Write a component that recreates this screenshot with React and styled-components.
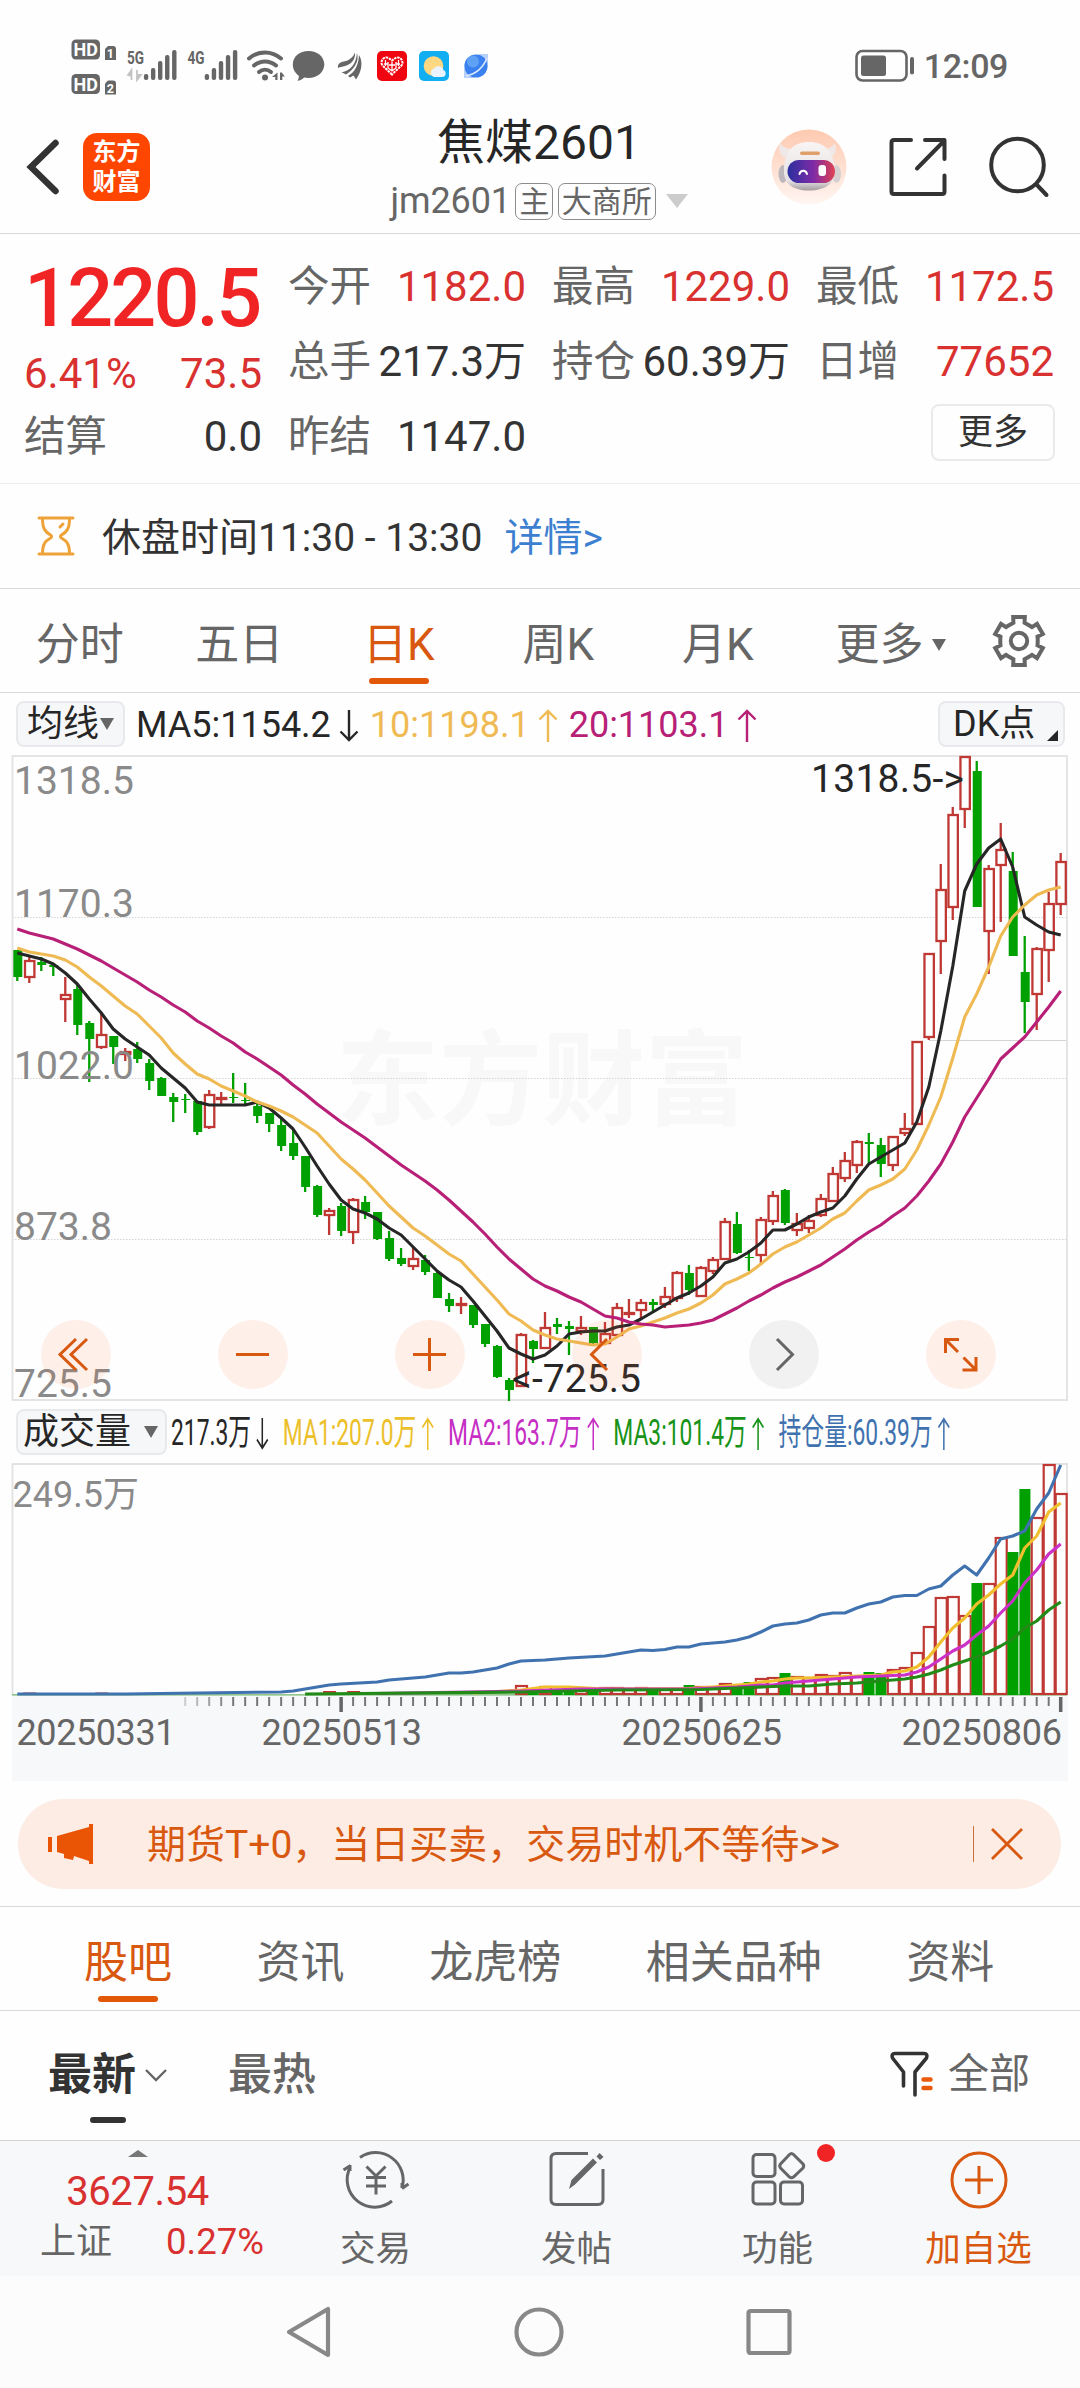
import React from "react";
import styled, { createGlobalStyle, css } from "styled-components";

const GlobalStyle = createGlobalStyle`
  body {
    margin: 0;
    background: #fefefe;
    color: #333;
    font-family: Roboto, "Noto Sans CJK SC", sans-serif;
  }
  svg {
    display: block;
    flex: none;
    overflow: visible;
  }
`;

const Page = styled.div`
  width: 1080px;
  height: 2388px;
  overflow: hidden;
  display: flex;
  flex-direction: column;
`;

/* status bar */
const StatusBar = styled.div`
  box-sizing: border-box;
  height: 100px;
  padding: 32px 72px 0 71px;
  display: flex;
  align-items: center;
  justify-content: space-between;
  color: #666;
`;
const StatusRight = styled.div`
  display: flex;
  align-items: center;
  gap: 9px;
`;
const Clock = styled.span`
  font-size: 34px;
  font-weight: 500;
  line-height: 40px;
  letter-spacing: -0.4px;
`;

/* header */
const Header = styled.header`
  height: 133px;
  padding: 0 31px 0 27px;
  border-bottom: 1px solid #d8d8d8;
  display: grid;
  grid-template-columns: 1fr auto 1fr;
  align-items: center;
`;
const HeaderSide = styled.div`
  display: flex;
  align-items: center;
  gap: ${({ $gap }) => $gap}px;
  justify-content: ${({ $end }) => ($end ? "flex-end" : "flex-start")};
`;
const Logo = styled.div`
  width: 67px;
  height: 68px;
  border-radius: 14px;
  background: #ff4600;
  color: #fff;
  font-size: 24px;
  font-weight: 700;
  line-height: 30px;
  display: flex;
  flex-direction: column;
  align-items: center;
  justify-content: center;
`;
const TitleBlock = styled.div`
  padding-left: 2px;
  display: flex;
  flex-direction: column;
  align-items: center;
  gap: 11px;
`;
const Title = styled.h1`
  margin: 0;
  font-size: 48px;
  font-weight: 400;
  line-height: 58px;
  color: #262626;
`;
const SubTitle = styled.div`
  display: flex;
  align-items: center;
  font-size: 36px;
  line-height: 37px;
  letter-spacing: -0.1px;
  color: #666;
`;
const Tag = styled.span`
  box-sizing: border-box;
  height: 37px;
  margin-left: 4.5px;
  padding: 0 3px;
  border: 1px solid #8c8c8c;
  border-radius: 7px;
  font-size: 30px;
  line-height: 35px;
`;
const Caret = styled.i`
  width: 0;
  height: 0;
  margin-left: ${({ $left }) => $left || 0}px;
  border-left: ${({ $w }) => $w / 2}px solid transparent;
  border-right: ${({ $w }) => $w / 2}px solid transparent;
  border-top: ${({ $h }) => $h}px solid ${({ $color }) => $color || "#666"};
`;

/* quote */
const Quote = styled.section`
  box-sizing: border-box;
  height: 250px;
  padding: 15px 25px 0 24px;
  border-bottom: 1px solid #ececec;
  display: flex;
  gap: 26px;
`;
const Summary = styled.div`
  width: 238px;
  display: flex;
  flex-direction: column;
`;
const Price = styled.div`
  font-size: 81px;
  font-weight: 500;
  line-height: 100px;
  letter-spacing: -2.9px;
  color: #f02424;
`;
const Pair = styled.div`
  height: ${({ $h }) => $h || 75}px;
  margin-top: ${({ $top }) => $top || 0}px;
  display: flex;
  align-items: center;
  justify-content: space-between;
  white-space: nowrap;
  font-size: 42px;
  line-height: 50px;
`;
const Stats = styled.div`
  flex: 1;
  display: grid;
  grid-template-columns: repeat(3, 238px);
  grid-auto-rows: 75px;
  column-gap: 26px;
`;
const Label = styled.span`
  font-size: 41.5px;
  color: #666;
`;
const Value = styled.span`
  color: ${({ $up }) => ($up ? "#d93030" : "#333")};
`;
const MoreButton = styled.button`
  grid-column: 3;
  justify-self: end;
  align-self: center;
  box-sizing: border-box;
  width: 124px;
  height: 57px;
  margin: 0 -1px 8px 0;
  padding: 0;
  border: 2px solid #eaeaea;
  border-radius: 8px;
  background: #fefefe;
  color: #333;
  font: inherit;
  font-size: 35px;
  line-height: 52px;
`;

const Notice = styled.div`
  height: 104px;
  padding: 0 37px;
  border-bottom: 1px solid #d8d8d8;
  display: flex;
  align-items: center;
  font-size: 39px;
  line-height: 50px;
`;
const NoticeText = styled.span`
  margin: 3px 0 0 27px;
`;
const NoticeLink = styled.a`
  margin: 3px 0 0 22px;
  color: #3d7fd0;
`;

/* tabs */
const PeriodTabs = styled.nav`
  height: 103px;
  border-bottom: 1px solid #d8d8d8;
  display: flex;
`;
const Tab = styled.div`
  box-sizing: border-box;
  height: 103px;
  padding-top: 29.5px;
  display: flex;
  flex-direction: column;
  align-items: center;
  gap: 7.5px;
  font-size: 44px;
  line-height: 52px;
  color: ${({ $active }) => ($active ? "#d9580f" : "#666")};
  ${({ $width }) =>
    $width &&
    css`
      width: ${$width}px;
    `}
`;
const TabRow = styled.div`
  display: flex;
  align-items: center;
`;
const TabBar = styled.i`
  width: 60px;
  height: 6px;
  border-radius: 3px;
  background: #e35709;
`;
const GearBox = styled.div`
  margin: 26px 0 0 9px;
`;

/* chart */
const Legend = styled.div`
  height: 62px;
  padding: 0 15px 0 16px;
  display: flex;
  align-items: center;
  font-size: 36px;
  line-height: 42px;
  white-space: nowrap;
`;
const Pill = styled.div`
  box-sizing: border-box;
  flex: none;
  width: ${({ $width }) => $width}px;
  height: 46px;
  padding: ${({ $pad }) => $pad || "0 9px"};
  border: 2px solid #e7e9ed;
  border-radius: 8px;
  background: #f6f7f9;
  color: #262626;
  display: flex;
  align-items: center;
  justify-content: space-between;
`;
const LegendItem = styled.span`
  display: flex;
  align-items: center;
  color: ${({ $color }) => $color};
`;
const MaLegend = styled.div`
  flex: 1;
  margin: 2px 0 0 11px;
  display: flex;
  gap: 3px;
`;
const VolLegend = styled.div`
  margin: 1px 0 0 4px;
  display: flex;
  gap: 14px;
  transform: scaleX(0.634);
  transform-origin: 0 50%;
`;
const Corner = styled.i`
  align-self: flex-end;
  margin-bottom: 4px;
  border-bottom: 11px solid #262626;
  border-left: 11px solid transparent;
`;
const ChartArea = styled.div`
  position: relative;
  margin-left: 12px;
  width: 1056px;
`;
const Controls = styled.div`
  position: absolute;
  left: 29px;
  bottom: 12px;
  display: flex;
  gap: 107.5px;
`;
const RoundButton = styled.div`
  width: 69.5px;
  height: 69.5px;
  border-radius: 50%;
  background: ${({ $muted }) =>
    $muted ? "rgba(0, 0, 0, 0.05)" : "rgba(255, 110, 50, 0.1)"};
  color: ${({ $muted }) => ($muted ? "#666" : "#d9580f")};
  display: flex;
  align-items: center;
  justify-content: center;
`;

/* banner */
const Banner = styled.div`
  box-sizing: border-box;
  height: 90px;
  margin: 18px 19px 17px 18px;
  padding: 0 38px 0 30px;
  border-radius: 45px;
  background: #fcece4;
  color: #d9580f;
  display: flex;
  align-items: center;
  font-size: 39px;
  line-height: 50px;
`;
const BannerText = styled.span`
  flex: 1;
  margin: 1px 0 0 53px;
`;
const BannerLine = styled.i`
  width: 1.5px;
  height: 36px;
  margin-right: 17px;
  background: #d0703c;
`;

const SectionTabs = styled.nav`
  height: 103px;
  padding-left: 84px;
  border-top: 1px solid #d8d8d8;
  border-bottom: 1px solid #d8d8d8;
  display: flex;
  gap: 84.6px;
`;
const FeedBar = styled.div`
  height: 129px;
  padding: 0 50px 0 48px;
  display: flex;
  justify-content: space-between;
`;
const SortGroup = styled.div`
  display: flex;
  gap: 60px;
`;
const Sort = styled.div`
  padding-top: 38px;
  display: flex;
  flex-direction: column;
  align-items: center;
  gap: 16px;
  font-size: 44px;
  font-weight: ${({ $active }) => ($active ? 700 : 500)};
  line-height: 52px;
  color: ${({ $active }) => ($active ? "#333" : "#666")};
`;
const SortRow = styled.div`
  display: flex;
  align-items: center;
  gap: 8px;
`;
const SortBar = styled.i`
  width: 36px;
  height: 6px;
  border-radius: 3px;
  background: #333;
`;
const Filter = styled.div`
  height: 126px;
  display: flex;
  align-items: center;
  gap: 14px;
  font-size: 41px;
  line-height: 50px;
  color: #666;
`;

/* bottom bar */
const BottomBar = styled.footer`
  box-sizing: border-box;
  height: 136px;
  border-top: 1px solid #d4d4d4;
  background: #f7f8fa;
  display: flex;
`;
const IndexBox = styled.div`
  width: 275px;
  padding-top: 9px;
  display: flex;
  flex-direction: column;
  align-items: center;
  color: #d93030;
`;
const UpCaret = styled.i`
  border-left: 10.5px solid transparent;
  border-right: 10.5px solid transparent;
  border-bottom: 7px solid #777;
`;
const IndexValue = styled.div`
  margin-top: 11px;
  font-size: 40px;
  line-height: 48px;
  letter-spacing: -0.4px;
`;
const IndexRow = styled.div`
  box-sizing: border-box;
  width: 100%;
  margin-top: 4px;
  padding: 0 11px 0 40px;
  display: flex;
  justify-content: space-between;
  font-size: 36.5px;
  line-height: 44px;
`;
const IndexName = styled.span`
  font-size: 36px;
  color: #666;
`;
const Action = styled.div`
  position: relative;
  width: 201px;
  padding-top: 8px;
  display: flex;
  flex-direction: column;
  align-items: center;
  gap: 18px;
  font-size: 35.5px;
  line-height: 44px;
  color: ${({ $accent }) => ($accent ? "#d9580f" : "#666")};
`;
const Dot = styled.i`
  position: absolute;
  left: 140px;
  top: 3px;
  width: 18px;
  height: 18px;
  border-radius: 50%;
  background: #f02424;
`;
const NavBar = styled.div`
  height: 112px;
  padding-right: 2px;
  background: #fcfcfc;
  display: flex;
  align-items: center;
  justify-content: center;
  gap: 182.5px;
`;

const RED = "#bf3833";
const GREEN = "#00a000";

// [up, high, body top, body bottom, low] in chart pixels
const candles = [
  [0, 950, 950, 977, 981], [1, 957, 961, 977, 983], [0, 957, 962, 965, 971], [0, 963, 965, 967, 976],
  [1, 977, 995, 999, 1022], [0, 985, 989, 1025, 1035], [0, 1021, 1023, 1039, 1082], [1, 1012, 1035, 1047, 1049],
  [0, 1036, 1036, 1047, 1064], [1, 1048, 1052, 1054, 1061], [0, 1042, 1049, 1059, 1063], [0, 1059, 1063, 1081, 1090],
  [0, 1077, 1078, 1096, 1096], [0, 1093, 1097, 1102, 1122], [0, 1094, 1099, 1100, 1113], [0, 1101, 1101, 1132, 1135],
  [1, 1090, 1095, 1127, 1129], [1, 1092, 1098, 1099, 1104], [0, 1073, 1097, 1098, 1103], [0, 1083, 1100, 1101, 1104],
  [0, 1103, 1106, 1116, 1123], [0, 1113, 1113, 1124, 1132], [0, 1118, 1125, 1146, 1151], [0, 1130, 1143, 1156, 1160],
  [0, 1156, 1156, 1187, 1192], [0, 1185, 1186, 1215, 1217], [1, 1208, 1211, 1215, 1235], [0, 1203, 1206, 1231, 1236],
  [1, 1198, 1200, 1232, 1244], [0, 1196, 1202, 1212, 1219], [0, 1212, 1212, 1239, 1240], [0, 1231, 1238, 1259, 1261],
  [0, 1248, 1258, 1264, 1266], [1, 1247, 1259, 1266, 1270], [0, 1255, 1260, 1272, 1275], [0, 1271, 1273, 1298, 1298],
  [0, 1293, 1299, 1306, 1312], [1, 1297, 1304, 1305, 1314], [0, 1305, 1305, 1325, 1328], [0, 1324, 1324, 1344, 1347],
  [0, 1345, 1346, 1377, 1378], [0, 1378, 1380, 1390, 1401], [1, 1333, 1335, 1386, 1387], [0, 1340, 1341, 1349, 1363],
  [1, 1312, 1328, 1348, 1348], [0, 1318, 1324, 1327, 1334], [0, 1321, 1326, 1329, 1355], [1, 1316, 1328, 1331, 1335],
  [0, 1327, 1327, 1343, 1344], [1, 1322, 1334, 1343, 1345], [1, 1303, 1308, 1335, 1338], [1, 1299, 1313, 1314, 1318],
  [1, 1299, 1303, 1310, 1319], [0, 1299, 1302, 1305, 1312], [1, 1287, 1297, 1304, 1308], [1, 1271, 1273, 1298, 1302],
  [0, 1265, 1273, 1290, 1295], [1, 1266, 1268, 1296, 1297], [1, 1257, 1260, 1271, 1274], [1, 1218, 1222, 1259, 1259],
  [0, 1212, 1224, 1253, 1254], [0, 1250, 1257, 1258, 1271], [1, 1217, 1220, 1255, 1263], [1, 1191, 1196, 1221, 1225],
  [0, 1189, 1190, 1223, 1225], [1, 1213, 1224, 1230, 1236], [1, 1215, 1221, 1228, 1233], [1, 1194, 1199, 1215, 1217],
  [1, 1167, 1174, 1201, 1202], [1, 1152, 1161, 1178, 1182], [1, 1140, 1142, 1165, 1173], [0, 1133, 1142, 1144, 1163],
  [0, 1138, 1145, 1164, 1177], [1, 1136, 1137, 1165, 1171], [1, 1113, 1129, 1133, 1136], [1, 1041, 1042, 1124, 1125],
  [1, 953, 954, 1037, 1040], [1, 864, 890, 941, 974], [1, 807, 815, 907, 920], [1, 757, 757, 809, 828],
  [0, 761, 771, 907, 907], [1, 865, 869, 931, 974], [1, 823, 850, 865, 922], [0, 852, 871, 956, 956],
  [0, 936, 972, 1002, 1033], [1, 947, 949, 994, 1030], [1, 892, 904, 950, 982], [1, 853, 862, 904, 915],
];

const ma5 = [
  953, 956, 959, 964, 973, 984, 999, 1013, 1029, 1039, 1047, 1055, 1068, 1078, 1088, 1102, 1105, 1105, 1105, 1105, 1102,
  1108, 1118, 1129, 1147, 1166, 1184, 1200, 1209, 1213, 1219, 1228, 1235, 1247, 1259, 1271, 1280, 1287, 1301, 1316,
  1331, 1348, 1354, 1359, 1355, 1346, 1334, 1332, 1331, 1331, 1327, 1325, 1319, 1312, 1305, 1298, 1293, 1286, 1277,
  1263, 1259, 1252, 1243, 1230, 1230, 1224, 1217, 1212, 1208, 1196, 1179, 1164, 1157, 1150, 1143, 1122, 1087, 1031,
  966, 891, 864, 848, 839, 867, 917, 925, 932, 935,
];
const ma10 = [
  948, 952, 954, 956, 960, 967, 977, 986, 996, 1006, 1014, 1026, 1038, 1053, 1064, 1074, 1079, 1086, 1091, 1096, 1102,
  1106, 1111, 1117, 1125, 1133, 1146, 1159, 1169, 1180, 1193, 1206, 1217, 1228, 1236, 1245, 1254, 1261, 1274, 1287,
  1300, 1314, 1321, 1330, 1335, 1339, 1341, 1343, 1345, 1344, 1337, 1329, 1326, 1322, 1318, 1313, 1309, 1303, 1295,
  1284, 1279, 1273, 1264, 1254, 1247, 1242, 1235, 1228, 1219, 1213, 1201, 1190, 1185, 1179, 1169, 1150, 1125, 1097,
  1058, 1017, 994, 967, 936, 917, 905, 895, 890, 887,
];
const ma20 = [
  929, 933, 936, 939, 944, 949, 955, 961, 968, 975, 982, 990, 997, 1005, 1012, 1021, 1028, 1036, 1043, 1052, 1059, 1067,
  1075, 1085, 1094, 1104, 1113, 1122, 1130, 1138, 1147, 1156, 1165, 1173, 1181, 1190, 1200, 1211, 1222, 1234, 1247,
  1259, 1269, 1279, 1286, 1291, 1297, 1302, 1309, 1316, 1318, 1322, 1324, 1325, 1327, 1326, 1325, 1323, 1320, 1314,
  1308, 1301, 1295, 1288, 1282, 1277, 1271, 1265, 1257, 1249, 1240, 1232, 1225, 1216, 1208, 1196, 1181, 1164, 1142,
  1117, 1098, 1079, 1059, 1048, 1037, 1022, 1007, 991,
];

// volume bar tops from candle 42 on, the ones before it are next to zero
const volumeTops = [
  1686, 1688, 1687, 1689, 1688, 1689, 1689, 1688, 1688, 1689, 1688, 1689, 1689, 1689, 1685, 1687, 1688, 1684, 1684,
  1682, 1679, 1678, 1673, 1677, 1678, 1675, 1676, 1673, 1677, 1672, 1673, 1670, 1668, 1653, 1627, 1598, 1597, 1616,
  1583, 1584, 1538, 1552, 1489, 1518, 1465, 1494,
];

const openInterest = [
  [0, 1694], [9, 1694], [15, 1693], [22, 1692], [23, 1691], [24, 1689], [25, 1687], [26, 1685], [27, 1684], [30, 1682],
  [31, 1680], [33, 1678], [34, 1677], [36, 1673], [37, 1673], [38, 1672], [40, 1668], [41, 1664], [42, 1661], [44, 1660],
  [46, 1658], [49, 1656], [52, 1650], [53, 1650.5], [54, 1649.5], [55, 1647], [56, 1647], [57, 1644], [59, 1642],
  [60, 1640], [61, 1637], [62, 1632], [63, 1626], [64, 1624], [65, 1623], [66, 1620], [67, 1615], [68, 1613], [69, 1613],
  [70, 1608], [71, 1604], [72, 1602], [73, 1597], [74, 1595.5], [75, 1595.5], [76, 1589], [77, 1586], [78, 1575],
  [79, 1566], [80, 1575], [81, 1558], [82, 1539], [83, 1536], [84, 1531], [85, 1509], [86, 1493], [87, 1465],
];
const volMa1 = [
  [38, 1693], [42, 1690], [44, 1687], [46, 1687], [49, 1689], [56, 1688.5], [58, 1687], [60, 1685], [61, 1684],
  [62, 1682], [63, 1681], [64, 1679], [65, 1678], [66, 1678], [68, 1677], [70, 1676], [72, 1675], [73, 1672],
  [74, 1671], [75, 1667], [76, 1657], [77, 1642], [78, 1628], [79, 1618], [80, 1604], [81, 1595], [82, 1584],
  [83, 1575], [84, 1548], [85, 1536], [86, 1512], [87, 1503],
];
const volMa2 = [
  [30, 1693.5], [42, 1691], [47, 1689], [56, 1689], [60, 1687], [62, 1685], [63, 1685], [64, 1683], [66, 1681],
  [68, 1679], [70, 1677], [74, 1675], [75, 1672], [76, 1667], [77, 1659], [78, 1651], [79, 1645], [80, 1635],
  [81, 1626], [82, 1613], [83, 1601], [84, 1583], [85, 1570], [86, 1554], [87, 1544],
];
const volMa3 = [
  [24, 1694], [42, 1692], [50, 1690], [57, 1689.5], [60, 1688], [64, 1686], [66, 1686], [68, 1684], [70, 1683],
  [72, 1681], [74, 1679], [75, 1677], [76, 1674], [77, 1670], [78, 1665], [79, 1661], [80, 1657], [81, 1652],
  [82, 1646], [83, 1639], [84, 1628], [85, 1621], [86, 1610], [87, 1602],
];

const xAt = (i) => 17.3 + i * 11.993;
const series = (ys) => ys.map((y, i) => `${xAt(i).toFixed(1)},${y}`).join(" ");
const sparse = (pts) => pts.map(([i, y]) => `${xAt(i).toFixed(1)},${y}`).join(" ");

function Line({ points, color }) {
  return (
    <polyline points={points} fill="none" stroke={color} strokeWidth="3.1" strokeLinejoin="round" />
  );
}

function KChart() {
  return (
    <svg width="1056" height="646" viewBox="12 755 1056 646">
      <text x="336" y="1117" fontSize="103" fontWeight="700" fill="#f8f8f8">东方财富</text>
      {[917.5, 1078.5, 1239.5].map((y) => (
        <line key={y} x1="12" x2="1067" y1={y} y2={y} stroke="#d4d4d4" strokeWidth="1" strokeDasharray="1.5 1.5" />
      ))}
      <line x1="929" x2="1067" y1="1040.5" y2="1040.5" stroke="#d4d4d4" />
      <rect x="12.5" y="756" width="1054.5" height="644" fill="none" stroke="#e2e2e2" strokeWidth="1.8" />
      {candles.map(([up, high, top, bottom, low], i) => {
        const x = xAt(i);
        const color = up ? RED : GREEN;
        return (
          <g key={i} stroke={color} strokeWidth="2.3">
            <line x1={x} x2={x} y1={high} y2={top} />
            <line x1={x} x2={x} y1={bottom} y2={low} />
            {up ? (
              <rect x={x - 4.3} y={top} width="9.4" height={bottom - top} fill="#fefefe" />
            ) : (
              <rect x={x - 4} y={top} width="9" height={Math.max(bottom - top, 1)} fill={color} stroke="none" />
            )}
          </g>
        );
      })}
      <Line points={series(ma5)} color="#262626" />
      <Line points={series(ma10)} color="#efba53" />
      <Line points={series(ma20)} color="#b81f77" />
      <g fontSize="39" fill="#8a8a8a">
        <text x="14" y="794">1318.5</text>
        <text x="14" y="917">1170.3</text>
        <text x="14" y="1079">1022.0</text>
        <text x="14" y="1240">873.8</text>
        <text x="14" y="1397">725.5</text>
      </g>
      <g fontSize="39" fill="#262626">
        <text x="811" y="792" textLength="153">1318.5-&gt;</text>
        <text x="512" y="1392" textLength="129">&lt;-725.5</text>
      </g>
    </svg>
  );
}

function VolumeChart() {
  const ticks = Array.from({ length: 74 }, (_, k) => k + 14);
  return (
    <svg width="1056" height="318" viewBox="12 1463 1056 318">
      <rect x="12" y="1695" width="1056" height="86" fill="#f7f8fa" />
      <path d="M12.5 1695V1464H1067V1695" fill="none" stroke="#e2e2e2" strokeWidth="1.8" />
      <line x1="12" x2="1067" y1="1694.8" y2="1694.8" stroke="#6fb568" strokeWidth="1.2" />
      {[1, 7].map((i) => (
        <rect key={i} x={xAt(i) - 6} y="1692.5" width="13" height="1.5" fill={RED} />
      ))}
      {[26, 28].map((i) => (
        <rect key={i} x={xAt(i) - 6} y="1691" width="13" height="3" fill={RED} />
      ))}
      {volumeTops.map((top, k) => {
        const i = k + 42;
        const x = xAt(i);
        return candles[i][0] ? (
          <rect key={i} x={x - 5} y={top} width="11" height={1694 - top} fill="#fefefe" stroke={RED} strokeWidth="2.2" />
        ) : (
          <rect key={i} x={x - 5.3} y={top} width="11" height={1695 - top} fill={GREEN} />
        );
      })}
      <Line points={sparse(openInterest)} color="#4072af" />
      <Line points={sparse(volMa1)} color="#f1bf2d" />
      <Line points={sparse(volMa2)} color="#cb31c6" />
      <Line points={sparse(volMa3)} color="#228b18" />
      {ticks.map((i) => {
        const major = i === 27 || i === 57 || i === 87;
        return (
          <line
            key={i}
            x1={xAt(i)}
            x2={xAt(i)}
            y1="1697"
            y2={major ? 1712 : 1706}
            stroke={major ? "#666" : "#777"}
            strokeWidth={major ? 3.5 : 2}
            opacity={Math.min(1, (i - 12) / 6)}
          />
        );
      })}
      <text x="12.5" y="1507" fontSize="36" fill="#8a8a8a">249.5万</text>
      <g fontSize="36" fill="#666">
        <text x="16.5" y="1745" textLength="159">20250331</text>
        <text x="261.5" y="1745" textLength="160.5">20250513</text>
        <text x="621.5" y="1745" textLength="160.5">20250625</text>
        <text x="901.5" y="1745" textLength="160.5">20250806</text>
      </g>
    </svg>
  );
}

function Arrow({ down }) {
  return (
    <svg width="36" height="36" viewBox="0 0 36 36" fill="none" stroke="currentColor" strokeWidth="2.4">
      <path d={down ? "M18 3V33M9.5 24.5L18 33L26.5 24.5" : "M18 35V4M9.5 12.5L18 4L26.5 12.5"} />
    </svg>
  );
}

function Signal({ x }) {
  return [74, 68, 61, 55, 50].map((top, i) => (
    <rect key={i} x={x + i * 7.05} y={top} width="4.4" height={80 - top} rx="2" />
  ));
}

function StatusIcons() {
  return (
    <svg width="420" height="68" viewBox="71 32 420 68" fill="#666">
      {[39.5, 74].map((y, i) => (
        <g key={y}>
          <rect x="71.5" y={y} width="28.5" height="20" rx="4.5" />
          <text x="85.8" y={y + 16.5} fontSize="18" fontWeight="700" fill="#fff" textAnchor="middle">HD</text>
          <path d={`M108 ${y + 6.5}h5q3 0 3 3v11h-11v-11z`} />
          <text x="110.4" y={y + 18.5} fontSize="12.5" fontWeight="700" fill="#fff" textAnchor="middle">{i + 1}</text>
        </g>
      ))}
      <text x="127" y="63.5" fontSize="19" fontWeight="700" textLength="17" lengthAdjust="spacingAndGlyphs">5G</text>
      <path d="M131.500 70v10M128 75l3.500-5v6zM137 70v10M137 80l4-5h-4z" fill="#c4c4c4" stroke="#c4c4c4" strokeWidth="1.8" />
      <Signal x={143.9} />
      <text x="187.500" y="63.500" fontSize="19" fontWeight="700" textLength="17" lengthAdjust="spacingAndGlyphs">4G</text>
      <Signal x={204.700} />
      <g fill="none" stroke="#666" strokeWidth="4" strokeLinecap="round">
        <path d="M249 58.500a24 24 0 0 1 32 0" />
        <path d="M254 65.500a17 17 0 0 1 22 0" />
        <path d="M259 72a9.500 9.500 0 0 1 12 0" />
      </g>
      <circle cx="265" cy="77.500" r="3" />
      <path d="M277.500 72.500v7.500h-2.200v-3h-3.300zM280 80v-7.500h1.800l3 4h-2.500v3.500z" />
      <path d="M308.500 51c9 0 15.800 5.800 15.800 13.500S317 78 308.500 78c-1.500 0-3-.2-4.400-.5-1.700 2-4.100 3-6.600 3.300.9-1.500 1.500-3 1.300-5.100-3.600-2.500-6-6.300-6-11.200C292.800 56.800 299.500 51 308.500 51z" />
      <path d="M338 68c-.5-4 2-6 6-6.500 5-1 9-4 11-9 .8 7-4 12-10 13.500-3 .7-5 1-7 2z" />
      <path d="M341.500 72.500c9-2 14.500-8 15.500-19.500 2.500 8.500-3 16.500-11 21.500-1.500-1-3-1.500-4.500-2z" />
      <path d="M348 76c7-4 10.500-11 11-21 4.500 7 2.500 17-3 24.500l-2.500-4-3.500 2z" />
      <rect x="377" y="51" width="30" height="30" rx="5" fill="#ee0510" />
      <path d="M392 74.500l-9.500-9c-3-4 1.500-10 6-7.500l3.500 2.500 3.500-2.500c4.500-2.500 9 3.500 6 7.500z" fill="none" stroke="#fff" strokeWidth="2" strokeDasharray="2.500 .8" />
      <path d="M388 62v6l4 3 4-3v-6M385.500 60v6M398.500 60v6M384 64h4M396 64h4M392 62v9M389 65h6" fill="none" stroke="#fff" strokeWidth="1.300" />
      <rect x="419" y="51" width="30" height="30" rx="5" fill="#12aef2" />
      <circle cx="433.500" cy="66" r="9.800" fill="#fdd782" />
      <path d="M434 77a4.500 4.500 0 0 1 0-8.500 5.300 5.300 0 0 1 9.500 1.500 3.700 3.700 0 0 1-.5 7z" fill="#e9f3fd" />
      <path d="M464 68v10h10zM478 54h10v10z" fill="#b6cffa" />
      <circle cx="476" cy="66" r="11.600" fill="#3a80ef" />
      <circle cx="473" cy="61.500" r="6" fill="#6fb0f8" opacity=".7" />
      <path d="M466 76q15-3 21-18" fill="none" stroke="#dbe8ff" strokeWidth="1.600" />
    </svg>
  );
}

function Battery() {
  return (
    <svg width="60" height="34" viewBox="0 0 60 34" fill="#666">
      <rect x="1.500" y="2" width="50" height="29.500" rx="6" fill="none" stroke="#666" strokeWidth="2.600" />
      <rect x="6" y="6.500" width="25" height="20.500" rx="2.500" />
      <rect x="55" y="8" width="4" height="17.500" rx="2" />
    </svg>
  );
}

function Robot() {
  return (
    <svg width="76" height="76" viewBox="0 0 76 76">
      <defs>
        <linearGradient id="halo" x1="0" y1="0" x2="0" y2="1">
          <stop offset="0" stopColor="#fec9b0" />
          <stop offset="1" stopColor="#fff6f2" />
        </linearGradient>
        <linearGradient id="visor" x1="0" y1="0" x2="1" y2="0">
          <stop offset="0" stopColor="#2a2fa0" />
          <stop offset=".55" stopColor="#7f2ba6" />
          <stop offset="1" stopColor="#e04452" />
        </linearGradient>
        <linearGradient id="shell" x1="0" y1="0" x2="0" y2="1">
          <stop offset="0" stopColor="#f8f5f4" />
          <stop offset=".8" stopColor="#e6e1e3" />
          <stop offset="1" stopColor="#a39da1" />
        </linearGradient>
      </defs>
      <circle cx="38" cy="38" r="37.500" fill="url(#halo)" />
      <path d="M9 14q-3 12 6 15l8-9Q14 21 9 14zM64 14q3 12-6 15l-8-9q10 1 14-6z" fill="#efe8e7" />
      <ellipse cx="12" cy="45" rx="4.500" ry="9" fill="#bdb7bb" />
      <ellipse cx="65.500" cy="45" rx="4.500" ry="9" fill="#d6d0d3" />
      <path d="M38 13c16 0 24 9 26 27 1 14-9 21.500-26 21.500S12 54 13 40C14 22 22 13 38 13z" fill="url(#shell)" />
      <rect x="29" y="22.500" width="20" height="3.600" rx="1.800" fill="#dfa06c" />
      <rect x="16.500" y="31" width="47.500" height="23" rx="11.500" fill="url(#visor)" />
      <path d="M28.500 45c1-4.500 6.500-4.500 7.500 0" fill="none" stroke="#fff" strokeWidth="2" strokeLinecap="round" />
      <rect x="47.500" y="36" width="7.500" height="11" rx="3" fill="#fff" />
    </svg>
  );
}

function Share() {
  return (
    <svg width="58" height="60" viewBox="0 0 58 60" fill="none" stroke="#333" strokeWidth="4" strokeLinecap="round" strokeLinejoin="round">
      <path d="M22 3H5Q2.500 3 2.500 5.500V54.500Q2.500 57 5 57H53Q55.500 57 55.500 54.500V38.500M36 3H55.500V22M54.500 4.500L28 31.500" />
    </svg>
  );
}

function Search() {
  return (
    <svg width="60" height="62" viewBox="0 0 60 62" fill="none" stroke="#333" strokeWidth="4" strokeLinecap="round">
      <circle cx="28.500" cy="29" r="26.300" />
      <path d="M47.500 48.500L57.500 59" />
    </svg>
  );
}

function Gear() {
  // six teeth around the hub
  const pts = [];
  for (let k = 0; k < 6; k++) {
    const a = k * 60 - 90;
    [[-23, 18.8], [-17, 19], [-13.500, 24.800], [13.500, 24.800], [17, 19], [23, 18.8]].forEach(([d, r]) => {
      const t = ((a + d) * Math.PI) / 180;
      pts.push(`${(26 + r * Math.cos(t)).toFixed(1)},${(26 + r * Math.sin(t)).toFixed(1)}`);
    });
  }
  return (
    <svg width="52" height="52" viewBox="0 0 52 52" fill="none" stroke="#666" strokeWidth="4">
      <polygon points={pts.join(" ")} />
      <circle cx="26" cy="26" r="8.200" />
    </svg>
  );
}

const controlPaths = [
  "M18 2L2 17.500L18 33M29 2L13 17.500L29 33",
  "M1 17.500H34",
  "M1 17.500H34M17.500 1V34",
  "M18 2L2.500 17.500L18 33",
  "M11 2L26.500 17.500L11 33",
  "M2.500 16V2.500H16M2.500 2.500L15 15M33 20V33H19.500M33 33L20.500 20.500",
];

const stats = [
  ["今开", "1182.0", true],
  ["最高", "1229.0", true],
  ["最低", "1172.5", true],
  ["总手", "217.3万"],
  ["持仓", "60.39万"],
  ["日增", "77652", true],
  ["昨结", "1147.0"],
];

const periods = ["分时", "五日", "日K", "周K", "月K"];
const sections = ["股吧", "资讯", "龙虎榜", "相关品种", "资料"];

const volLegend = [
  ["217.3万", "#262626", true],
  ["MA1:207.0万", "#ecc02b"],
  ["MA2:163.7万", "#c62fc4"],
  ["MA3:101.4万", "#189318"],
  ["持仓量:60.39万", "#4072af"],
];

function App() {
  return (
    <Page>
      <GlobalStyle />
      <StatusBar>
        <StatusIcons />
        <StatusRight>
          <Battery />
          <Clock>12:09</Clock>
        </StatusRight>
      </StatusBar>

      <Header>
        <HeaderSide $gap={23}>
          <svg width="33" height="56" viewBox="0 0 33 56" fill="none" stroke="#333" strokeWidth="6.500" strokeLinecap="round">
            <path d="M28.500 4L4 28L28.500 52" />
          </svg>
          <Logo>
            <span>东方</span>
            <span>财富</span>
          </Logo>
        </HeaderSide>
        <TitleBlock>
          <Title>焦煤2601</Title>
          <SubTitle>
            jm2601
            <Tag>主</Tag>
            <Tag>大商所</Tag>
            <Caret $w={22} $h={14} $left={10} $color="#ccc" />
          </SubTitle>
        </TitleBlock>
        <HeaderSide $gap={42} $end>
          <Robot />
          <Share />
          <Search />
        </HeaderSide>
      </Header>

      <Quote>
        <Summary>
          <Price>1220.5</Price>
          <Pair $h={50}>
            <Value $up>6.41%</Value>
            <Value $up>73.5</Value>
          </Pair>
          <Pair $h={50} $top={13}>
            <Label>结算</Label>
            <Value>0.0</Value>
          </Pair>
        </Summary>
        <Stats>
          {stats.map(([label, value, up]) => (
            <Pair key={label}>
              <Label>{label}</Label>
              <Value $up={up}>{value}</Value>
            </Pair>
          ))}
          <MoreButton>更多</MoreButton>
        </Stats>
      </Quote>

      <Notice>
        <svg width="38" height="40" viewBox="0 0 38 40" fill="none" stroke="#eda338" strokeWidth="3" strokeLinecap="round">
          <path d="M2 2H36M2 38H36M5.500 3c0 10 3 13 8 16 1.500 1 1.500 2 0 3-5 3-8 6-8 15M32.500 3c0 10-3 13-8 16-1.500 1-1.500 2 0 3 5 3 8 6 8 15M26 8l-3 3" />
        </svg>
        <NoticeText>休盘时间11:30 - 13:30</NoticeText>
        <NoticeLink>详情&gt;</NoticeLink>
      </Notice>

      <PeriodTabs>
        {periods.map((name) => (
          <Tab key={name} $width={159.500} $active={name === "日K"}>
            {name}
            {name === "日K" && <TabBar />}
          </Tab>
        ))}
        <Tab $width={186}>
          <TabRow>
            更多
            <Caret $w={15} $h={12} $left={8} />
          </TabRow>
        </Tab>
        <GearBox>
          <Gear />
        </GearBox>
      </PeriodTabs>

      <Legend>
        <Pill $width={109}>
          均线
          <Caret $w={14} $h={12} />
        </Pill>
        <MaLegend>
          <LegendItem $color="#262626">MA5:1154.2<Arrow down /></LegendItem>
          <LegendItem $color="#efba53">10:1198.1<Arrow /></LegendItem>
          <LegendItem $color="#b81f77">20:1103.1<Arrow /></LegendItem>
        </MaLegend>
        <Pill $width={127} $pad="0 5px 0 13px">
          DK点
          <Corner />
        </Pill>
      </Legend>
      <ChartArea>
        <KChart />
        <Controls>
          {controlPaths.map((d, i) => (
            <RoundButton key={d} $muted={i === 4}>
              <svg width="35" height="35" viewBox="0 0 35 35" fill="none" stroke="currentColor" strokeWidth="3">
                <path d={d} />
              </svg>
            </RoundButton>
          ))}
        </Controls>
      </ChartArea>

      <Legend>
        <Pill $width={151} $pad="0 7px 0 5px">
          成交量
          <Caret $w={15} $h={12} />
        </Pill>
        <VolLegend>
          {volLegend.map(([text, color, down]) => (
            <LegendItem key={text} $color={color}>
              {text}
              <Arrow down={down} />
            </LegendItem>
          ))}
        </VolLegend>
      </Legend>
      <ChartArea>
        <VolumeChart />
      </ChartArea>

      <Banner>
        <svg width="46" height="40" viewBox="0 0 46 40" fill="#e95504">
          <path d="M0 13h4v15H0zM9 12L41 3V0h4v40h-4v-3L26 32l-1 4-9-2v-4l-7-2z" />
        </svg>
        <BannerText>期货T+0，当日买卖，交易时机不等待&gt;&gt;</BannerText>
        <BannerLine />
        <svg width="32" height="32" viewBox="0 0 32 32" stroke="#d9580f" strokeWidth="2.800">
          <path d="M1 1L31 31M31 1L1 31" />
        </svg>
      </Banner>

      <SectionTabs>
        {sections.map((name, i) => (
          <Tab key={name} $active={i === 0}>
            {name}
            {i === 0 && <TabBar />}
          </Tab>
        ))}
      </SectionTabs>

      <FeedBar>
        <SortGroup>
          <Sort $active>
            <SortRow>
              最新
              <svg width="24" height="16" viewBox="0 0 24 16" fill="none" stroke="#666" strokeWidth="2.400">
                <path d="M2 3L12 13L22 3" />
              </svg>
            </SortRow>
            <SortBar />
          </Sort>
          <Sort>最热</Sort>
        </SortGroup>
        <Filter>
          <svg width="44" height="46" viewBox="0 0 44 46" fill="none" stroke="#333" strokeWidth="3.600" strokeLinecap="round" strokeLinejoin="round">
            <path d="M13.500 35V21L2.500 7Q1 2.500 5 2.500H34Q38 2.500 36.500 7L25 21V44" />
            <path d="M33.500 28.500h7M33.500 37h7" stroke="#ea5a0c" strokeWidth="4.500" />
          </svg>
          全部
        </Filter>
      </FeedBar>

      <BottomBar>
        <IndexBox>
          <UpCaret />
          <IndexValue>3627.54</IndexValue>
          <IndexRow>
            <IndexName>上证</IndexName>
            0.27%
          </IndexRow>
        </IndexBox>
        <Action>
          <svg width="66" height="60" viewBox="0 0 66 60" fill="none" stroke="#666" strokeWidth="3">
            <path d="M17 8.500A27.500 27.500 0 0 1 59 39M59 39V34M59 39.500L65.500 35M49 52A27.500 27.500 0 0 1 7 18.500M7 16V22M7.500 16.500L.5 21" />
            <path d="M23.500 17.500L33 27L42.500 17.500M23 28.500H43M23 37H43M33 28V45.500" />
          </svg>
          交易
        </Action>
        <Action>
          <svg width="56" height="60" viewBox="0 0 56 60" fill="none" stroke="#666" strokeWidth="3">
            <path d="M39 4.500H7Q2 4.500 2 9.500V50.500Q2 55.500 7 55.500H49Q54 55.500 54 50.500V20" />
            <path d="M20 40L22.500 31L44 9.500L48 13.500L26 35.500ZM47.500 7.500L50.500 4L54.500 8L51 11Z" fill="#666" stroke="none" />
          </svg>
          发帖
        </Action>
        <Action>
          <svg width="56" height="60" viewBox="0 0 56 60" fill="none" stroke="#666" strokeWidth="3">
            <rect x="3" y="5.500" width="22" height="22" rx="3.500" />
            <rect x="3" y="33" width="22" height="22" rx="3.500" />
            <rect x="30.500" y="33" width="22" height="22" rx="3.500" />
            <path d="M39.500 5.500Q41.500 3.500 43.500 5.500L53 15Q54.500 17 53 19L43.500 28Q41.500 29.500 39.500 28L30.500 19Q29 17 30.500 15Z" />
          </svg>
          功能
          <Dot />
        </Action>
        <Action $accent>
          <svg width="60" height="60" viewBox="0 0 60 60" fill="none" stroke="#d9580f" strokeWidth="3">
            <circle cx="30" cy="31" r="27" />
            <path d="M16 31H44M30 17V45" />
          </svg>
          加自选
        </Action>
      </BottomBar>

      <NavBar>
        <svg width="45" height="52" viewBox="0 0 45 52" fill="none" stroke="#888" strokeWidth="4.200" strokeLinejoin="round">
          <path d="M42 3V49L3 26Z" />
        </svg>
        <svg width="50" height="50" viewBox="0 0 50 50" fill="none" stroke="#888" strokeWidth="4.200">
          <circle cx="25" cy="25" r="22.500" />
        </svg>
        <svg width="46" height="48" viewBox="0 0 46 48" fill="none" stroke="#888" strokeWidth="4.200">
          <rect x="2.500" y="3" width="41" height="42" rx="2" />
        </svg>
      </NavBar>
    </Page>
  );
}

export default App;
